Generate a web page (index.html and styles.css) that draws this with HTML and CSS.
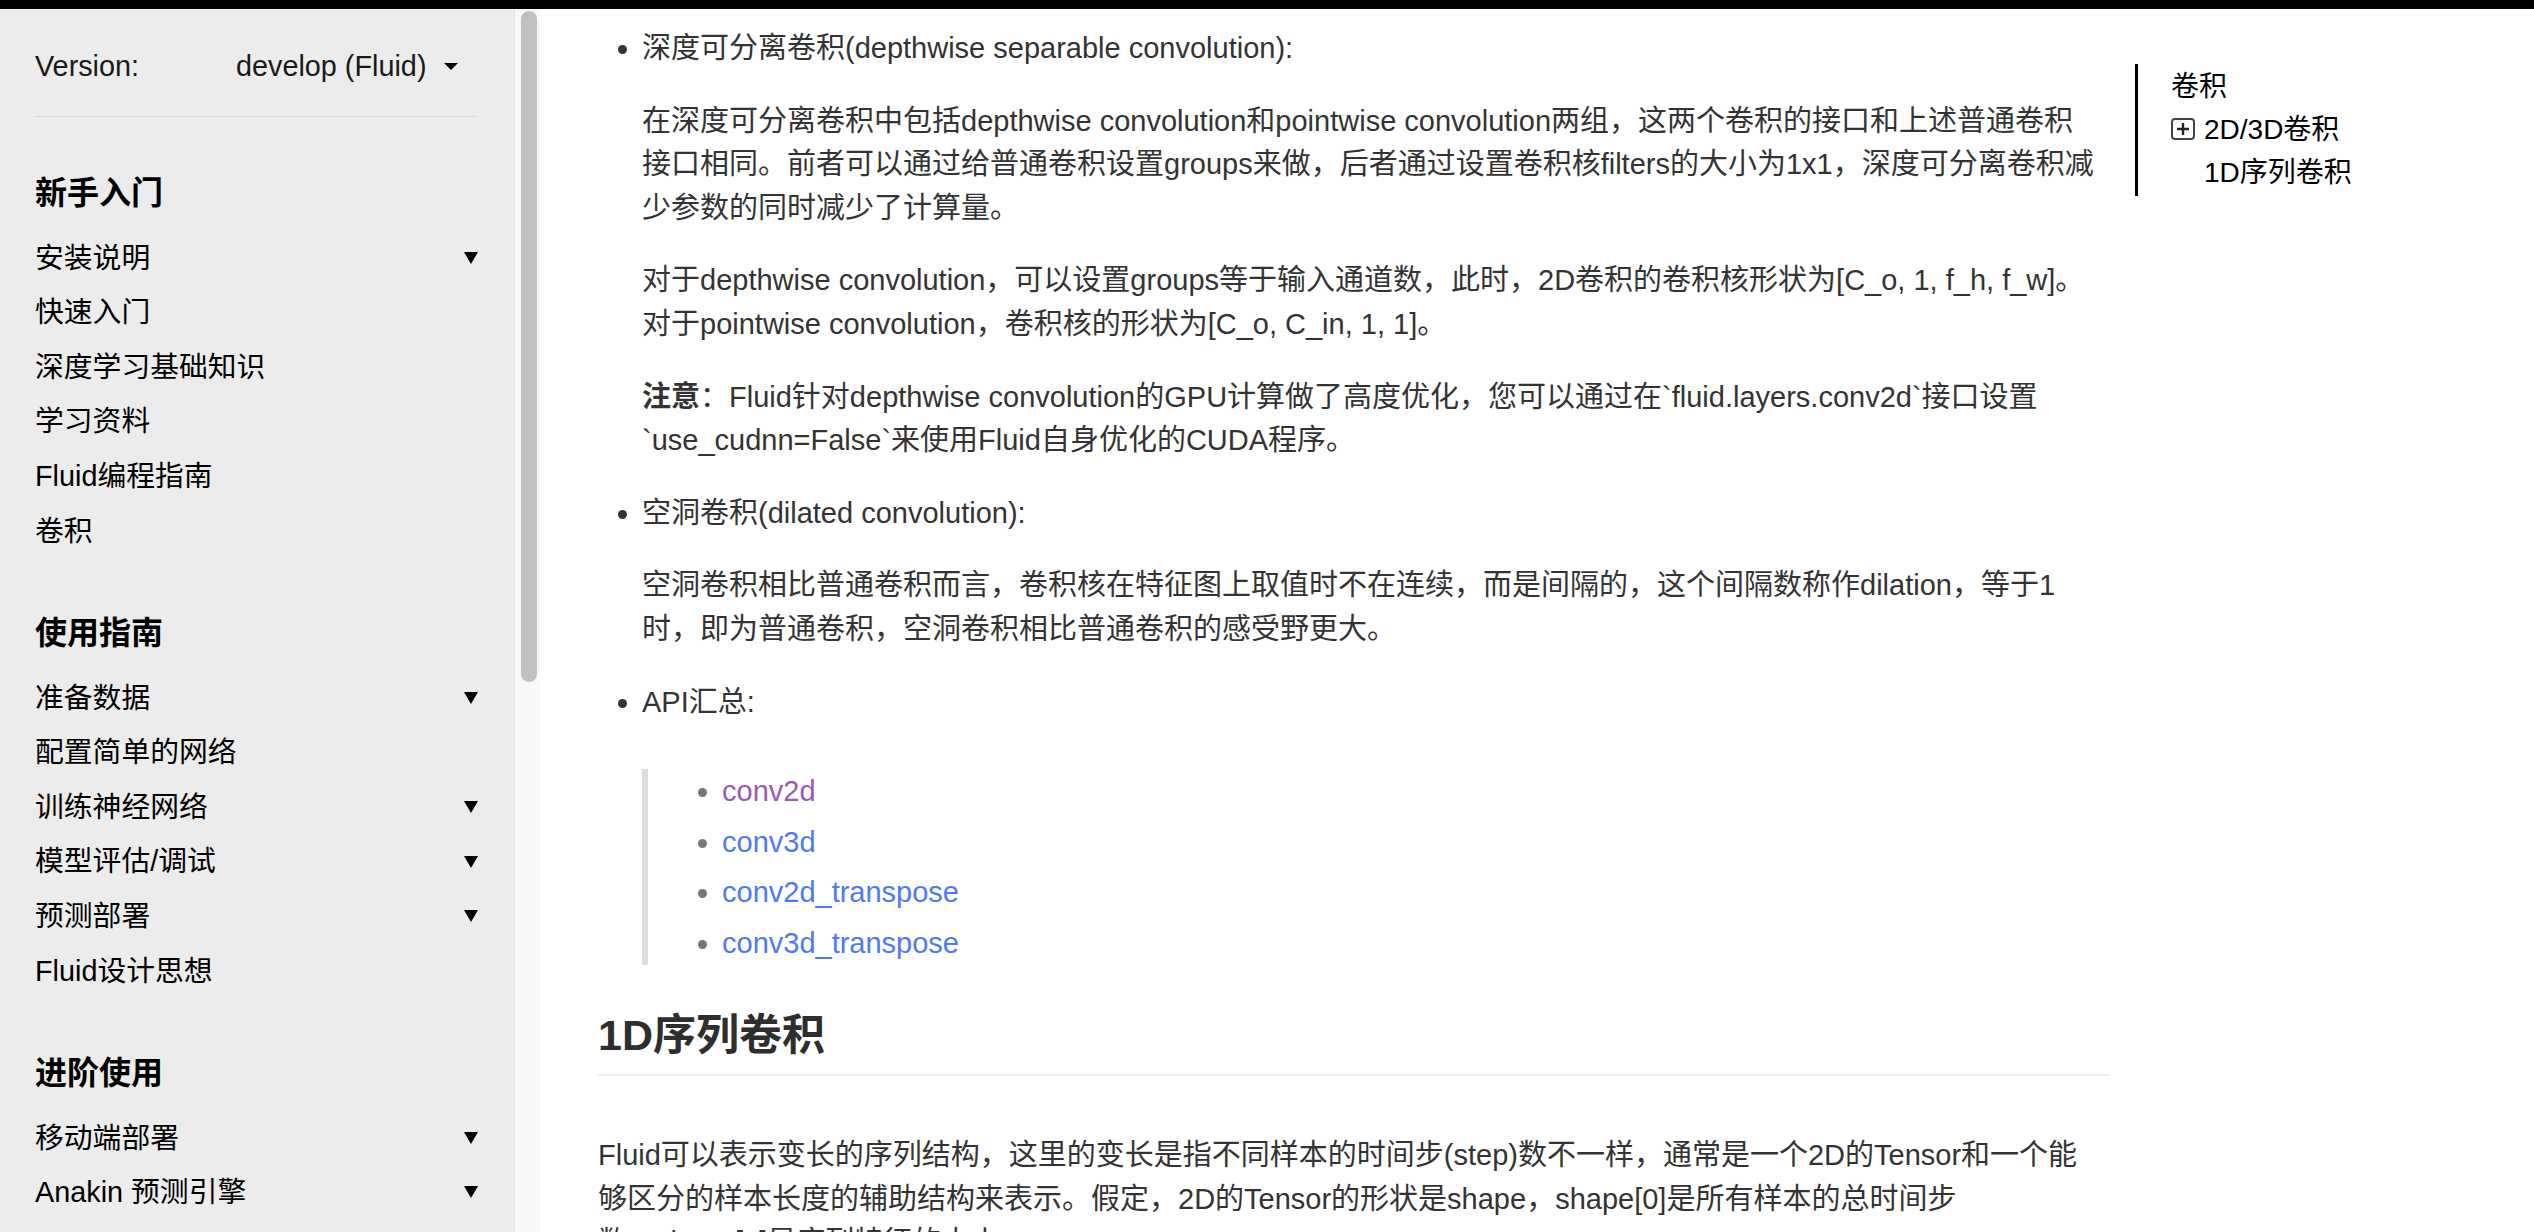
FILE: index.html
```html
<!DOCTYPE html>
<html lang="zh-CN">
<head>
<meta charset="utf-8">
<title>卷积 — PaddlePaddle 文档</title>
<link rel="stylesheet" href="styles.css">
</head>
<body>
<div class="topbar"></div>
<div class="layout">
  <nav class="sidebar">
    <div class="version">
      <span class="version-label">Version:</span>
      <span class="version-value">develop (Fluid)</span>
      <span class="caret"></span>
    </div>
    <hr class="side-rule">
    <section class="side-section">
      <h3 class="side-heading">新手入门</h3>
      <ul class="side-list">
        <li class="side-item">安装说明<span class="tri"></span></li>
        <li class="side-item">快速入门</li>
        <li class="side-item">深度学习基础知识</li>
        <li class="side-item">学习资料</li>
        <li class="side-item">Fluid编程指南</li>
        <li class="side-item">卷积</li>
      </ul>
    </section>
    <section class="side-section">
      <h3 class="side-heading">使用指南</h3>
      <ul class="side-list">
        <li class="side-item">准备数据<span class="tri"></span></li>
        <li class="side-item">配置简单的网络</li>
        <li class="side-item">训练神经网络<span class="tri"></span></li>
        <li class="side-item">模型评估/调试<span class="tri"></span></li>
        <li class="side-item">预测部署<span class="tri"></span></li>
        <li class="side-item">Fluid设计思想</li>
      </ul>
    </section>
    <section class="side-section">
      <h3 class="side-heading">进阶使用</h3>
      <ul class="side-list">
        <li class="side-item">移动端部署<span class="tri"></span></li>
        <li class="side-item">Anakin 预测引擎<span class="tri"></span></li>
        <li class="side-item">如何贡献代码<span class="tri"></span></li>
      </ul>
    </section>
  </nav>
  <div class="scrolltrack"><div class="thumb"></div></div>
  <main class="main">
    <article class="content">
      <ul class="doc-list">
        <li>深度可分离卷积(depthwise separable convolution):
          <p>在深度可分离卷积中包括depthwise convolution和pointwise convolution两组，这两个卷积的接口和上述普通卷积<br>接口相同。前者可以通过给普通卷积设置groups来做，后者通过设置卷积核filters的大小为1x1，深度可分离卷积减<br>少参数的同时减少了计算量。</p>
          <p>对于depthwise convolution，可以设置groups等于输入通道数，此时，2D卷积的卷积核形状为[C_o, 1, f_h, f_w]。<br>对于pointwise convolution，卷积核的形状为[C_o, C_in, 1, 1]。</p>
          <p><strong>注意</strong>：Fluid针对depthwise convolution的GPU计算做了高度优化，您可以通过在`fluid.layers.conv2d`接口设置<br>`use_cudnn=False`来使用Fluid自身优化的CUDA程序。</p>
        </li>
        <li>空洞卷积(dilated convolution):
          <p>空洞卷积相比普通卷积而言，卷积核在特征图上取值时不在连续，而是间隔的，这个间隔数称作dilation，等于1<br>时，即为普通卷积，空洞卷积相比普通卷积的感受野更大。</p>
        </li>
        <li>API汇总:
          <blockquote class="api-quote">
            <ul class="api-list">
              <li><a class="visited" href="#conv2d">conv2d</a></li>
              <li><a href="#conv3d">conv3d</a></li>
              <li><a href="#conv2d_transpose">conv2d_transpose</a></li>
              <li><a href="#conv3d_transpose">conv3d_transpose</a></li>
            </ul>
          </blockquote>
        </li>
      </ul>
      <h2 class="doc-h2">1D序列卷积</h2>
      <p class="doc-para">Fluid可以表示变长的序列结构，这里的变长是指不同样本的时间步(step)数不一样，通常是一个2D的Tensor和一个能<br>够区分的样本长度的辅助结构来表示。假定，2D的Tensor的形状是shape，shape[0]是所有样本的总时间步<br>数，shape[1]是序列特征的大小。</p>
    </article>
    <aside class="toc">
      <ul class="toc-list">
        <li>卷积
          <ul class="toc-sub">
            <li><svg class="toggle" viewBox="0 0 24 22" aria-hidden="true"><rect x="1" y="1" width="22" height="20" rx="3" ry="3" fill="none" stroke="#444" stroke-width="2"/><path d="M6 11h12M12 5v12" stroke="#222" stroke-width="2.4" fill="none"/></svg>2D/3D卷积</li>
            <li>1D序列卷积</li>
          </ul>
        </li>
      </ul>
    </aside>
  </main>
</div>
</body>
</html>
```

FILE: styles.css
```css
html, body {
  margin: 0;
  padding: 0;
}

body {
  height: 1232px;
  overflow: hidden;
  background: #fff;
  font-family: "Liberation Sans", "Noto Sans CJK SC", sans-serif;
  color: #333;
}

.topbar {
  height: 9px;
  background: #000;
}

.layout {
  display: flex;
  height: 1223px;
}

/* ---------- sidebar ---------- */
.sidebar {
  width: 514px;
  flex: none;
  box-sizing: border-box;
  background: #ececec;
  padding: 35px 36px 0 35px;
  overflow: hidden;
  color: #000;
  font-size: 28.8px;
}

.version {
  display: flex;
  align-items: center;
  height: 44px;
  line-height: 44px;
  color: #1a1a1a;
}

.version-label {
  width: 201px;
}

.caret {
  width: 0;
  height: 0;
  border-left: 7px solid transparent;
  border-right: 7px solid transparent;
  border-top: 7px solid #000;
  margin-left: 18px;
}

.side-rule {
  margin: 28px 3px 0 0;
  border: 0;
  border-top: 1px solid #d4d4d4;
  height: 0;
}

.side-heading {
  margin: 52px 0 13.7px;
  font-size: 32px;
  line-height: 48px;
  font-weight: bold;
}

.side-section + .side-section .side-heading {
  margin-top: 50.7px;
}

.side-list {
  list-style: none;
  margin: 0;
  padding: 0;
}

.side-item {
  display: flex;
  justify-content: space-between;
  align-items: center;
  height: 54.6px;
  line-height: 54.6px;
  white-space: nowrap;
}

.tri {
  width: 0;
  height: 0;
  border-left: 7.5px solid transparent;
  border-right: 7.5px solid transparent;
  border-top: 12px solid #000;
}

.scrolltrack {
  width: 26px;
  flex: none;
  box-sizing: border-box;
  background: #f8f8f8;
  border-left: 1px solid #e9e9e9;
  padding: 2px 0 0 6px;
}

.thumb {
  width: 16px;
  height: 671px;
  border-radius: 8px;
  background: #c1c1c1;
}

/* ---------- main ---------- */
.main {
  flex: 1;
  display: flex;
  padding: 18px 0 0 58px;
  overflow: hidden;
}

.content {
  width: 1511px;
  flex: none;
  font-size: 29px;
  line-height: 43.6px;
}

.doc-list {
  margin: 0;
  padding-left: 44px;
  list-style: disc;
}

.doc-list > li + li {
  margin-top: 29px;
}

.doc-list p {
  margin: 29px 0 0;
}

.doc-list strong {
  font-weight: bold;
}

.api-quote {
  margin: 45px 0 0;
  padding: 0;
  border-left: 6px solid #ddd;
}

.api-list {
  margin: 0;
  padding-left: 74px;
  list-style: disc;
}

.api-list li {
  line-height: 44px;
}

.api-list li + li {
  margin-top: 6.5px;
}

.api-list li::marker {
  color: #777;
}

.api-list a {
  color: #4e7af2;
  text-decoration: none;
}

.api-list a.visited {
  color: #9b59b6;
}

.doc-h2 {
  margin: 44.5px 0 0;
  font-size: 43px;
  line-height: 52px;
  font-weight: bold;
  padding-bottom: 13px;
  border-bottom: 2px solid #eee;
  color: #2e2e2e;
}

.doc-para {
  margin: 58px 0 0;
}

/* ---------- toc ---------- */
.toc {
  margin: 37px 0 0 26px;
  font-size: 28px;
  line-height: 43px;
  color: #000;
}

.toc-list {
  list-style: none;
  margin: 0;
  padding: 1px 0 2px 33px;
  border-left: 3px solid #000;
}

.toc-sub {
  list-style: none;
  margin: 0;
  padding-left: 33px;
}

.toc-sub li {
  position: relative;
  white-space: nowrap;
}

.toggle {
  position: absolute;
  left: -33px;
  top: 10px;
  width: 24px;
  height: 22px;
}
```
